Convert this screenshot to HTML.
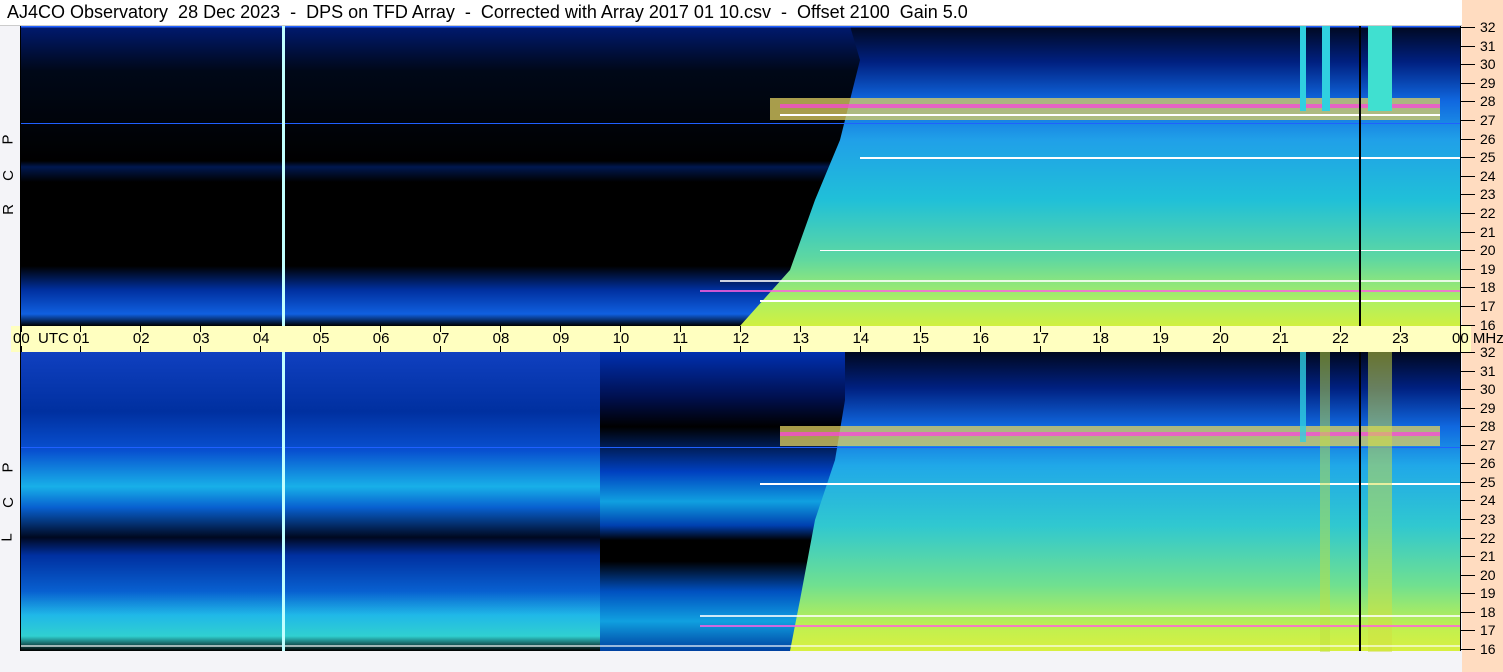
<!DOCTYPE html>
<html><head><meta charset="utf-8"><style>
body{margin:0;width:1503px;height:672px;overflow:hidden;background:#f4f4f8;font-family:"Liberation Sans",sans-serif;position:relative}
.t{position:absolute;font-size:15px;color:#000;white-space:nowrap}
#title{position:absolute;left:0;top:0;width:1462px;height:25px;background:#fff;border-bottom:1px solid #ccc}
#title span{position:absolute;left:7px;top:2px;font-size:18px}
#peach{position:absolute;left:1462px;top:0;width:41px;height:672px;background:#ffdcc0}
#band{position:absolute;left:11px;top:326px;width:1460px;height:26px;background:#ffffc0}
.lab{position:absolute;font-size:15px;transform:rotate(-90deg)}
</style></head><body>
<div id="peach"></div>
<div id="title"><span>AJ4CO Observatory&nbsp; 28 Dec 2023&nbsp; -&nbsp; DPS on TFD Array&nbsp; -&nbsp; Corrected with Array 2017 01 10.csv&nbsp; -&nbsp; Offset 2100&nbsp; Gain 5.0</span></div>
<div id="band"></div>
<svg width="1503" height="672" style="position:absolute;left:0;top:0">
<defs>
<linearGradient id="rt" x1="0" y1="26" x2="0" y2="326" gradientUnits="userSpaceOnUse">
<stop offset="0" stop-color="#000820"/><stop offset="0.12" stop-color="#002080"/><stop offset="0.25" stop-color="#1068e0"/><stop offset="0.38" stop-color="#20a0e8"/><stop offset="0.58" stop-color="#20c0d8"/><stop offset="0.78" stop-color="#60d8a0"/><stop offset="0.92" stop-color="#b0f060"/><stop offset="1" stop-color="#d0f040"/></linearGradient>
<linearGradient id="lt" x1="0" y1="26" x2="0" y2="326" gradientUnits="userSpaceOnUse">
<stop offset="0" stop-color="#001a70"/><stop offset="0.15" stop-color="#000818"/><stop offset="0.45" stop-color="#000"/><stop offset="0.47" stop-color="#001850"/><stop offset="0.52" stop-color="#000"/><stop offset="0.8" stop-color="#000"/><stop offset="0.88" stop-color="#0030a0"/><stop offset="0.96" stop-color="#1060e0"/><stop offset="1" stop-color="#000"/></linearGradient>
<linearGradient id="lb" x1="0" y1="352" x2="0" y2="651" gradientUnits="userSpaceOnUse">
<stop offset="0" stop-color="#1040c0"/><stop offset="0.2" stop-color="#0030a0"/><stop offset="0.33" stop-color="#0850d0"/><stop offset="0.45" stop-color="#18b0e8"/><stop offset="0.52" stop-color="#0860d0"/><stop offset="0.62" stop-color="#000820"/><stop offset="0.68" stop-color="#0030a0"/><stop offset="0.8" stop-color="#0860d0"/><stop offset="0.88" stop-color="#20b8e8"/><stop offset="0.95" stop-color="#30d0d0"/><stop offset="1" stop-color="#000"/></linearGradient>
<linearGradient id="mb" x1="0" y1="352" x2="0" y2="651" gradientUnits="userSpaceOnUse">
<stop offset="0" stop-color="#0030b0"/><stop offset="0.15" stop-color="#001050"/><stop offset="0.25" stop-color="#000"/><stop offset="0.4" stop-color="#0040c0"/><stop offset="0.5" stop-color="#10a0e0"/><stop offset="0.58" stop-color="#0040b0"/><stop offset="0.63" stop-color="#000"/><stop offset="0.7" stop-color="#000"/><stop offset="0.8" stop-color="#0050c0"/><stop offset="0.9" stop-color="#10a0e0"/><stop offset="1" stop-color="#0040a0"/></linearGradient>
<linearGradient id="rb" x1="0" y1="352" x2="0" y2="651" gradientUnits="userSpaceOnUse">
<stop offset="0" stop-color="#000820"/><stop offset="0.12" stop-color="#002080"/><stop offset="0.25" stop-color="#1068e0"/><stop offset="0.38" stop-color="#20a8e8"/><stop offset="0.58" stop-color="#30c8d0"/><stop offset="0.78" stop-color="#70e090"/><stop offset="0.92" stop-color="#c0f050"/><stop offset="1" stop-color="#d8f040"/></linearGradient>
</defs>
<rect x="21" y="26" width="1439" height="300" fill="url(#lt)"/>
<polygon points="850,26 1460,26 1460,326 740,326 790,270 815,200 840,140 860,60" fill="url(#rt)"/>
<rect x="770" y="98" width="670" height="22" fill="#e0d060" opacity="0.75"/>
<rect x="780" y="104" width="660" height="4" fill="#ff40e0" opacity="0.7"/>
<rect x="780" y="114" width="660" height="2" fill="#fff"/>
<rect x="21" y="26" width="1439" height="1.5" fill="#2060ff"/>
<rect x="21" y="123" width="1439" height="1" fill="#2060ff"/>
<rect x="860" y="157" width="600" height="2" fill="#fff"/>
<rect x="760" y="300" width="700" height="2" fill="#fff"/>
<rect x="700" y="290" width="760" height="2" fill="#ff60e0" opacity="0.8"/>
<rect x="720" y="280" width="740" height="2" fill="#fff" opacity="0.8"/>
<rect x="820" y="250" width="640" height="1" fill="#fff"/>
<rect x="1300" y="26" width="6" height="85" fill="#30d0e0"/>
<rect x="1322" y="26" width="8" height="85" fill="#30d0e0"/>
<rect x="1368" y="26" width="24" height="85" fill="#40e0d0"/>
<rect x="21" y="352" width="580" height="299" fill="url(#lb)"/>
<rect x="600" y="352" width="250" height="299" fill="url(#mb)"/>
<polygon points="845,352 1460,352 1460,651 790,651 800,600 815,520 835,460 845,400" fill="url(#rb)"/>
<rect x="780" y="426" width="660" height="20" fill="#e0d060" opacity="0.75"/>
<rect x="780" y="432" width="660" height="4" fill="#ff40e0" opacity="0.7"/>
<rect x="21" y="447" width="1439" height="1" fill="#2060ff"/>
<rect x="760" y="483" width="700" height="2" fill="#fff"/>
<rect x="1300" y="352" width="6" height="90" fill="#30d0e0" opacity="0.8"/>
<rect x="1320" y="352" width="10" height="300" fill="#c0e040" opacity="0.5"/>
<rect x="1368" y="352" width="24" height="300" fill="#d0e040" opacity="0.5"/>
<rect x="700" y="615" width="760" height="2" fill="#fff" opacity="0.8"/>
<rect x="700" y="625" width="760" height="2" fill="#ff60e0" opacity="0.8"/>
<rect x="21" y="645" width="1439" height="2" fill="#fff" opacity="0.6"/>
<rect x="282" y="26" width="3" height="300" fill="#c0ffff"/>
<rect x="282" y="352" width="3" height="299" fill="#c0ffff"/>
<rect x="1359" y="26" width="2" height="300" fill="#000"/>
<rect x="1359" y="352" width="2" height="299" fill="#000"/>
<g stroke="#000" stroke-width="1">
<path d="M20.5 26V651M1460.5 26V651"/>
</g>
</svg>
<div id="ticks"></div>
<div class="lab" style="left:3px;top:131px">P</div>
<div class="lab" style="left:3px;top:167px">C</div>
<div class="lab" style="left:3px;top:201px">R</div>
<div class="lab" style="left:3px;top:459px">P</div>
<div class="lab" style="left:3px;top:494px">C</div>
<div class="lab" style="left:3px;top:529px">L</div>
<script>
var h='';
for(var i=0;i<=24;i++){var x=21+i*59.96;var l=(i%24<10?'0':'')+(i%24);
if(i==0)l='00&nbsp; UTC';if(i==24)l='00 MHz';
h+='<div style="position:absolute;left:'+(x-0.5)+'px;top:326px;width:1px;height:6px;background:#000"></div>';
h+='<div style="position:absolute;left:'+(x-0.5)+'px;top:346px;width:1px;height:6px;background:#000"></div>';
h+='<div class="t" style="left:'+(x-8)+'px;top:330px">'+l+'</div>';}
for(var f=32;f>=16;f--){var y1=27+(32-f)*18.6,y2=352+(32-f)*18.56;
[y1,y2].forEach(function(y){h+='<div style="position:absolute;left:1461px;top:'+Math.round(y)+'px;width:14px;height:1px;background:#000"></div><div class="t" style="left:1480px;top:'+Math.round(y-8)+'px;font-size:14px">'+f+'</div>';});}
document.getElementById('ticks').innerHTML=h;
</script>
</body></html>
